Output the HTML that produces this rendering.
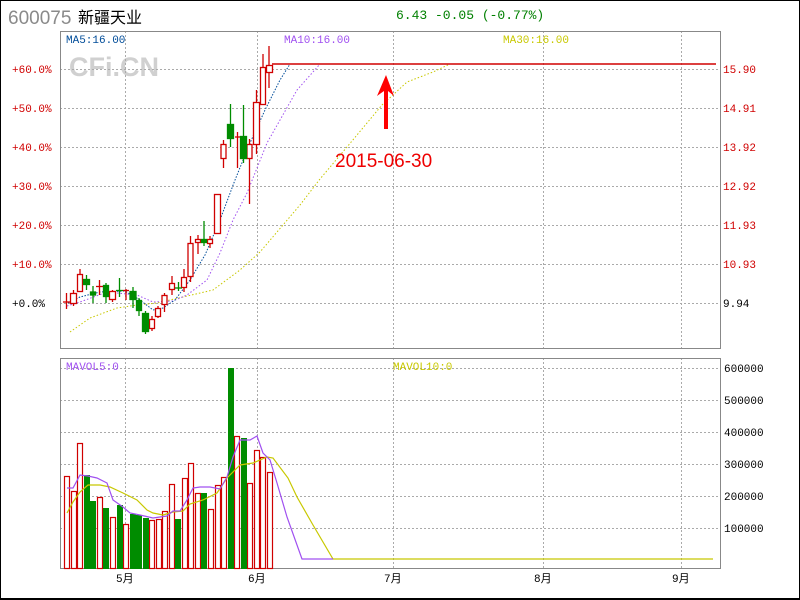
<!DOCTYPE html>
<html><head><meta charset="utf-8"><style>
html,body{margin:0;padding:0;background:#fff}
svg{display:block}
text{font-family:"Liberation Mono","Noto Sans CJK SC",monospace}
</style></head><body>
<svg width="800" height="600" xmlns="http://www.w3.org/2000/svg">
<rect x="0.5" y="0.5" width="799" height="598" fill="#fff" stroke="#000"/>
<line x1="0" y1="599" x2="800" y2="599" stroke="#000" stroke-width="2"/>
<text x="8" y="24" font-size="19" fill="#8a8a8a" style="font-family:'Liberation Sans',sans-serif">600075</text>
<text x="78" y="23" font-size="16" fill="#000" style="font-family:'Liberation Sans','Noto Sans CJK SC',sans-serif">新疆天业</text>
<text x="396" y="19" font-size="13" fill="#008000">6.43 -0.05 (-0.77%)</text>
<text x="69" y="76" font-size="27" font-weight="bold" fill="#d0d0d0" style="font-family:'Liberation Sans',sans-serif">CFi.CN</text>
<g stroke="#aaa" stroke-dasharray="2,2" stroke-width="1">
<line x1="60" y1="69.5" x2="720" y2="69.5"/><line x1="60" y1="108.5" x2="720" y2="108.5"/><line x1="60" y1="147.5" x2="720" y2="147.5"/><line x1="60" y1="186.5" x2="720" y2="186.5"/><line x1="60" y1="225.5" x2="720" y2="225.5"/><line x1="60" y1="264.5" x2="720" y2="264.5"/><line x1="60" y1="303.5" x2="720" y2="303.5"/>
<line x1="60" y1="368.5" x2="720" y2="368.5"/><line x1="60" y1="400.5" x2="720" y2="400.5"/><line x1="60" y1="432.5" x2="720" y2="432.5"/><line x1="60" y1="464.5" x2="720" y2="464.5"/><line x1="60" y1="496.5" x2="720" y2="496.5"/><line x1="60" y1="528.5" x2="720" y2="528.5"/>
<line x1="125.5" y1="31" x2="125.5" y2="348"/><line x1="257.5" y1="31" x2="257.5" y2="348"/><line x1="393.5" y1="31" x2="393.5" y2="348"/><line x1="543.5" y1="31" x2="543.5" y2="348"/><line x1="681.5" y1="31" x2="681.5" y2="348"/>
<line x1="125.5" y1="358" x2="125.5" y2="568"/><line x1="257.5" y1="358" x2="257.5" y2="568"/><line x1="393.5" y1="358" x2="393.5" y2="568"/><line x1="543.5" y1="358" x2="543.5" y2="568"/><line x1="681.5" y1="358" x2="681.5" y2="568"/>
</g>
<rect x="60.5" y="31.5" width="660" height="317" fill="none" stroke="#888"/>
<rect x="60.5" y="358.5" width="660" height="210" fill="none" stroke="#888"/>
<g font-size="11" fill="#d00000">
<text x="12" y="73">+60.0%</text><text x="12" y="112">+50.0%</text><text x="12" y="151">+40.0%</text><text x="12" y="190">+30.0%</text><text x="12" y="229">+20.0%</text><text x="12" y="268">+10.0%</text>
<text x="723" y="73">15.90</text><text x="723" y="112">14.91</text><text x="723" y="151">13.92</text><text x="723" y="190">12.92</text><text x="723" y="229">11.93</text><text x="723" y="268">10.93</text>
</g>
<g font-size="11" fill="#000">
<text x="12" y="307">+0.0%</text><text x="723" y="307">9.94</text>
<text x="724" y="372">600000</text><text x="724" y="404">500000</text><text x="724" y="436">400000</text><text x="724" y="468">300000</text><text x="724" y="500">200000</text><text x="724" y="532">100000</text>
</g>
<g font-size="11" style="font-family:'Liberation Sans','Noto Sans CJK SC',sans-serif" fill="#000">
<text x="116" y="582">5月</text><text x="248" y="582">6月</text><text x="384" y="582">7月</text><text x="534" y="582">8月</text><text x="672" y="582">9月</text>
</g>
<g font-size="11">
<text x="66" y="43" fill="#004c99">MA5:16.00</text>
<text x="284" y="43" fill="#a050f0">MA10:16.00</text>
<text x="503" y="43" fill="#c8c800">MA30:16.00</text>
<text x="66" y="370" fill="#a050f0">MAVOL5:0</text>
<text x="393" y="370" fill="#c8c800">MAVOL10:0</text>
</g>
<polyline fill="none" stroke="#c8c800" stroke-dasharray="1.5,2" points="70,332 90,318 117,308 137,305 157,303 183,297 213,290 240,270 260,252 300,205 320,179 347,147 382,105 407,82 433,72 450,64"/>
<polyline fill="none" stroke="#a050f0" stroke-dasharray="1.5,2" points="67,306 80,302 107,292 137,295 153,302 173,301 187,295 207,280 220,253 233,220 247,193 267,143 297,90 320,64"/>
<polyline fill="none" stroke="#004c99" stroke-dasharray="1.5,1.5" points="68,303 80,297 100,292 125,291 140,300 153,310 163,308 175,300 190,280 205,255 220,220 235,180 250,143 265,110 280,80 290,64"/>
<line x1="272" y1="64" x2="716" y2="64" stroke="#d00000" stroke-width="1.5"/>
<g stroke="#d00000" stroke-width="1.3" fill="#fff">
<line x1="66.5" y1="293" x2="66.5" y2="309"/><line x1="63" y1="302" x2="70" y2="302"/>
<line x1="73.5" y1="290" x2="73.5" y2="306"/><rect x="70.5" y="293.5" width="6" height="10"/>
<line x1="80" y1="269" x2="80" y2="292"/><rect x="77.5" y="274.5" width="5" height="17"/>
<line x1="99.5" y1="280" x2="99.5" y2="295"/><line x1="96" y1="286.5" x2="103" y2="286.5"/>
<line x1="112.5" y1="290" x2="112.5" y2="302"/><rect x="109.5" y="291.5" width="6" height="8"/>
<line x1="126" y1="289" x2="126" y2="300"/><line x1="123" y1="290.5" x2="129" y2="290.5"/>
<line x1="152" y1="316" x2="152" y2="331"/><rect x="149.5" y="319.5" width="5" height="9"/>
<line x1="158" y1="306" x2="158" y2="318"/><rect x="155.5" y="308.5" width="5" height="8"/>
<line x1="164.5" y1="293" x2="164.5" y2="312"/><rect x="162" y="295.5" width="5" height="9"/>
<line x1="172" y1="276" x2="172" y2="295"/><rect x="169.5" y="283.5" width="5" height="6"/>
<line x1="184" y1="269" x2="184" y2="292"/><rect x="181.5" y="277.5" width="5" height="10"/>
<line x1="190.5" y1="236" x2="190.5" y2="282"/><rect x="188" y="243.5" width="5" height="33"/>
<line x1="198" y1="235" x2="198" y2="254"/><rect x="195.5" y="239.5" width="5" height="3"/>
<line x1="210" y1="236" x2="210" y2="248"/><rect x="207.5" y="239.5" width="5" height="4"/>
<rect x="214.5" y="194.5" width="6" height="39"/>
<line x1="223.5" y1="140" x2="223.5" y2="168"/><rect x="221" y="144.5" width="5" height="14"/>
<line x1="237.5" y1="132" x2="237.5" y2="168"/><line x1="235" y1="137" x2="240" y2="137"/>
<line x1="249.5" y1="139" x2="249.5" y2="204"/><rect x="247" y="144.5" width="5" height="14"/>
<line x1="256.5" y1="90" x2="256.5" y2="154"/><rect x="253.5" y="102.5" width="6" height="42"/>
<line x1="263" y1="54" x2="263" y2="104"/><rect x="260.5" y="67.5" width="5" height="37"/>
<line x1="269" y1="46" x2="269" y2="88"/><rect x="266.5" y="65.5" width="6" height="7"/>
</g>
<g stroke="#008c00" stroke-width="1.3" fill="#008c00">
<line x1="86.5" y1="275" x2="86.5" y2="290"/><rect x="83.5" y="279.5" width="6" height="5"/>
<line x1="93" y1="286" x2="93" y2="303"/><rect x="90.5" y="292" width="5" height="3"/>
<line x1="106" y1="283" x2="106" y2="303"/><rect x="103.5" y="285.5" width="5" height="11"/>
<line x1="119.5" y1="278" x2="119.5" y2="297"/><line x1="116" y1="290.5" x2="123" y2="290.5"/>
<line x1="133" y1="287" x2="133" y2="308"/><rect x="130" y="291.5" width="6" height="8"/>
<line x1="139" y1="298" x2="139" y2="316"/><rect x="136.5" y="300.5" width="5" height="10"/>
<line x1="145.5" y1="311" x2="145.5" y2="334"/><rect x="142.5" y="313.5" width="6" height="18"/>
<line x1="178.5" y1="282" x2="178.5" y2="291"/><line x1="175" y1="288" x2="182" y2="288"/>
<line x1="204" y1="221" x2="204" y2="246"/><rect x="201.5" y="239.5" width="5" height="3"/>
<line x1="230.5" y1="104" x2="230.5" y2="147"/><rect x="227.5" y="124.5" width="6" height="14"/>
<line x1="243.5" y1="105" x2="243.5" y2="163"/><rect x="240.5" y="136.5" width="6" height="22"/>
</g>
<polygon points="386,75 394,96 388,91 388,129 384,129 384,91 377,96" fill="#ff0000"/>
<text x="335" y="167" font-size="19" fill="#ee0000" style="font-family:'Liberation Sans',sans-serif">2015-06-30</text>
<g stroke="#d00000" stroke-width="1.2" fill="#fff">
<rect x="64.5" y="476.5" width="5" height="92"/><rect x="71.5" y="491.5" width="5" height="77"/><rect x="77.5" y="443.5" width="5" height="125"/>
<rect x="97.5" y="497.5" width="5" height="71"/><rect x="110.5" y="517.5" width="5" height="51"/><rect x="123.5" y="524.5" width="5" height="44"/>
<rect x="149.5" y="520.5" width="5" height="48"/><rect x="156.5" y="519.5" width="5" height="49"/><rect x="162.5" y="511.5" width="5" height="57"/><rect x="169.5" y="484.5" width="5" height="84"/>
<rect x="182.5" y="478.5" width="5" height="90"/><rect x="188.5" y="463.5" width="5" height="105"/><rect x="195.5" y="493.5" width="5" height="75"/>
<rect x="208.5" y="509.5" width="5" height="59"/><rect x="215.5" y="485.5" width="5" height="83"/><rect x="221.5" y="477.5" width="5" height="91"/>
<rect x="234.5" y="436.5" width="5" height="132"/><rect x="247.5" y="483.5" width="5" height="85"/><rect x="254.5" y="450.5" width="5" height="118"/><rect x="260.5" y="457.5" width="5" height="111"/><rect x="267.5" y="472.5" width="5" height="96"/>
</g>
<g fill="#008c00">
<rect x="84" y="475" width="6" height="94"/><rect x="90" y="501" width="6" height="68"/><rect x="103" y="508" width="6" height="61"/><rect x="117" y="505" width="6" height="64"/>
<rect x="130" y="514" width="6" height="55"/><rect x="136" y="515" width="6" height="54"/><rect x="143" y="518" width="6" height="51"/><rect x="175" y="519" width="6" height="50"/>
<rect x="201" y="493" width="6" height="76"/><rect x="228" y="368" width="6" height="201"/><rect x="241" y="438" width="6" height="131"/>
</g>
<polyline fill="none" stroke="#c8c800" stroke-width="1.2" points="67,513 73,502 80,492 88,485 100,485 110,487 123,493 137,500 147,510 153,513 163,515 173,512 183,511 190,504 203,500 217,493 227,478 240,465 253,463 267,457 273,458 288,478 297,497 313,525 333,559 713,559"/>
<polyline fill="none" stroke="#a050f0" stroke-width="1.2" points="67,488 73,488 80,475 88,476 97,478 107,483 113,500 123,507 130,513 140,515 153,518 167,516 173,511 180,511 187,500 193,488 200,487 210,487 220,489 227,477 233,457 240,440 250,440 257,436 263,453 270,460 277,483 287,517 302,559 333,559"/>
</svg>
</body></html>
